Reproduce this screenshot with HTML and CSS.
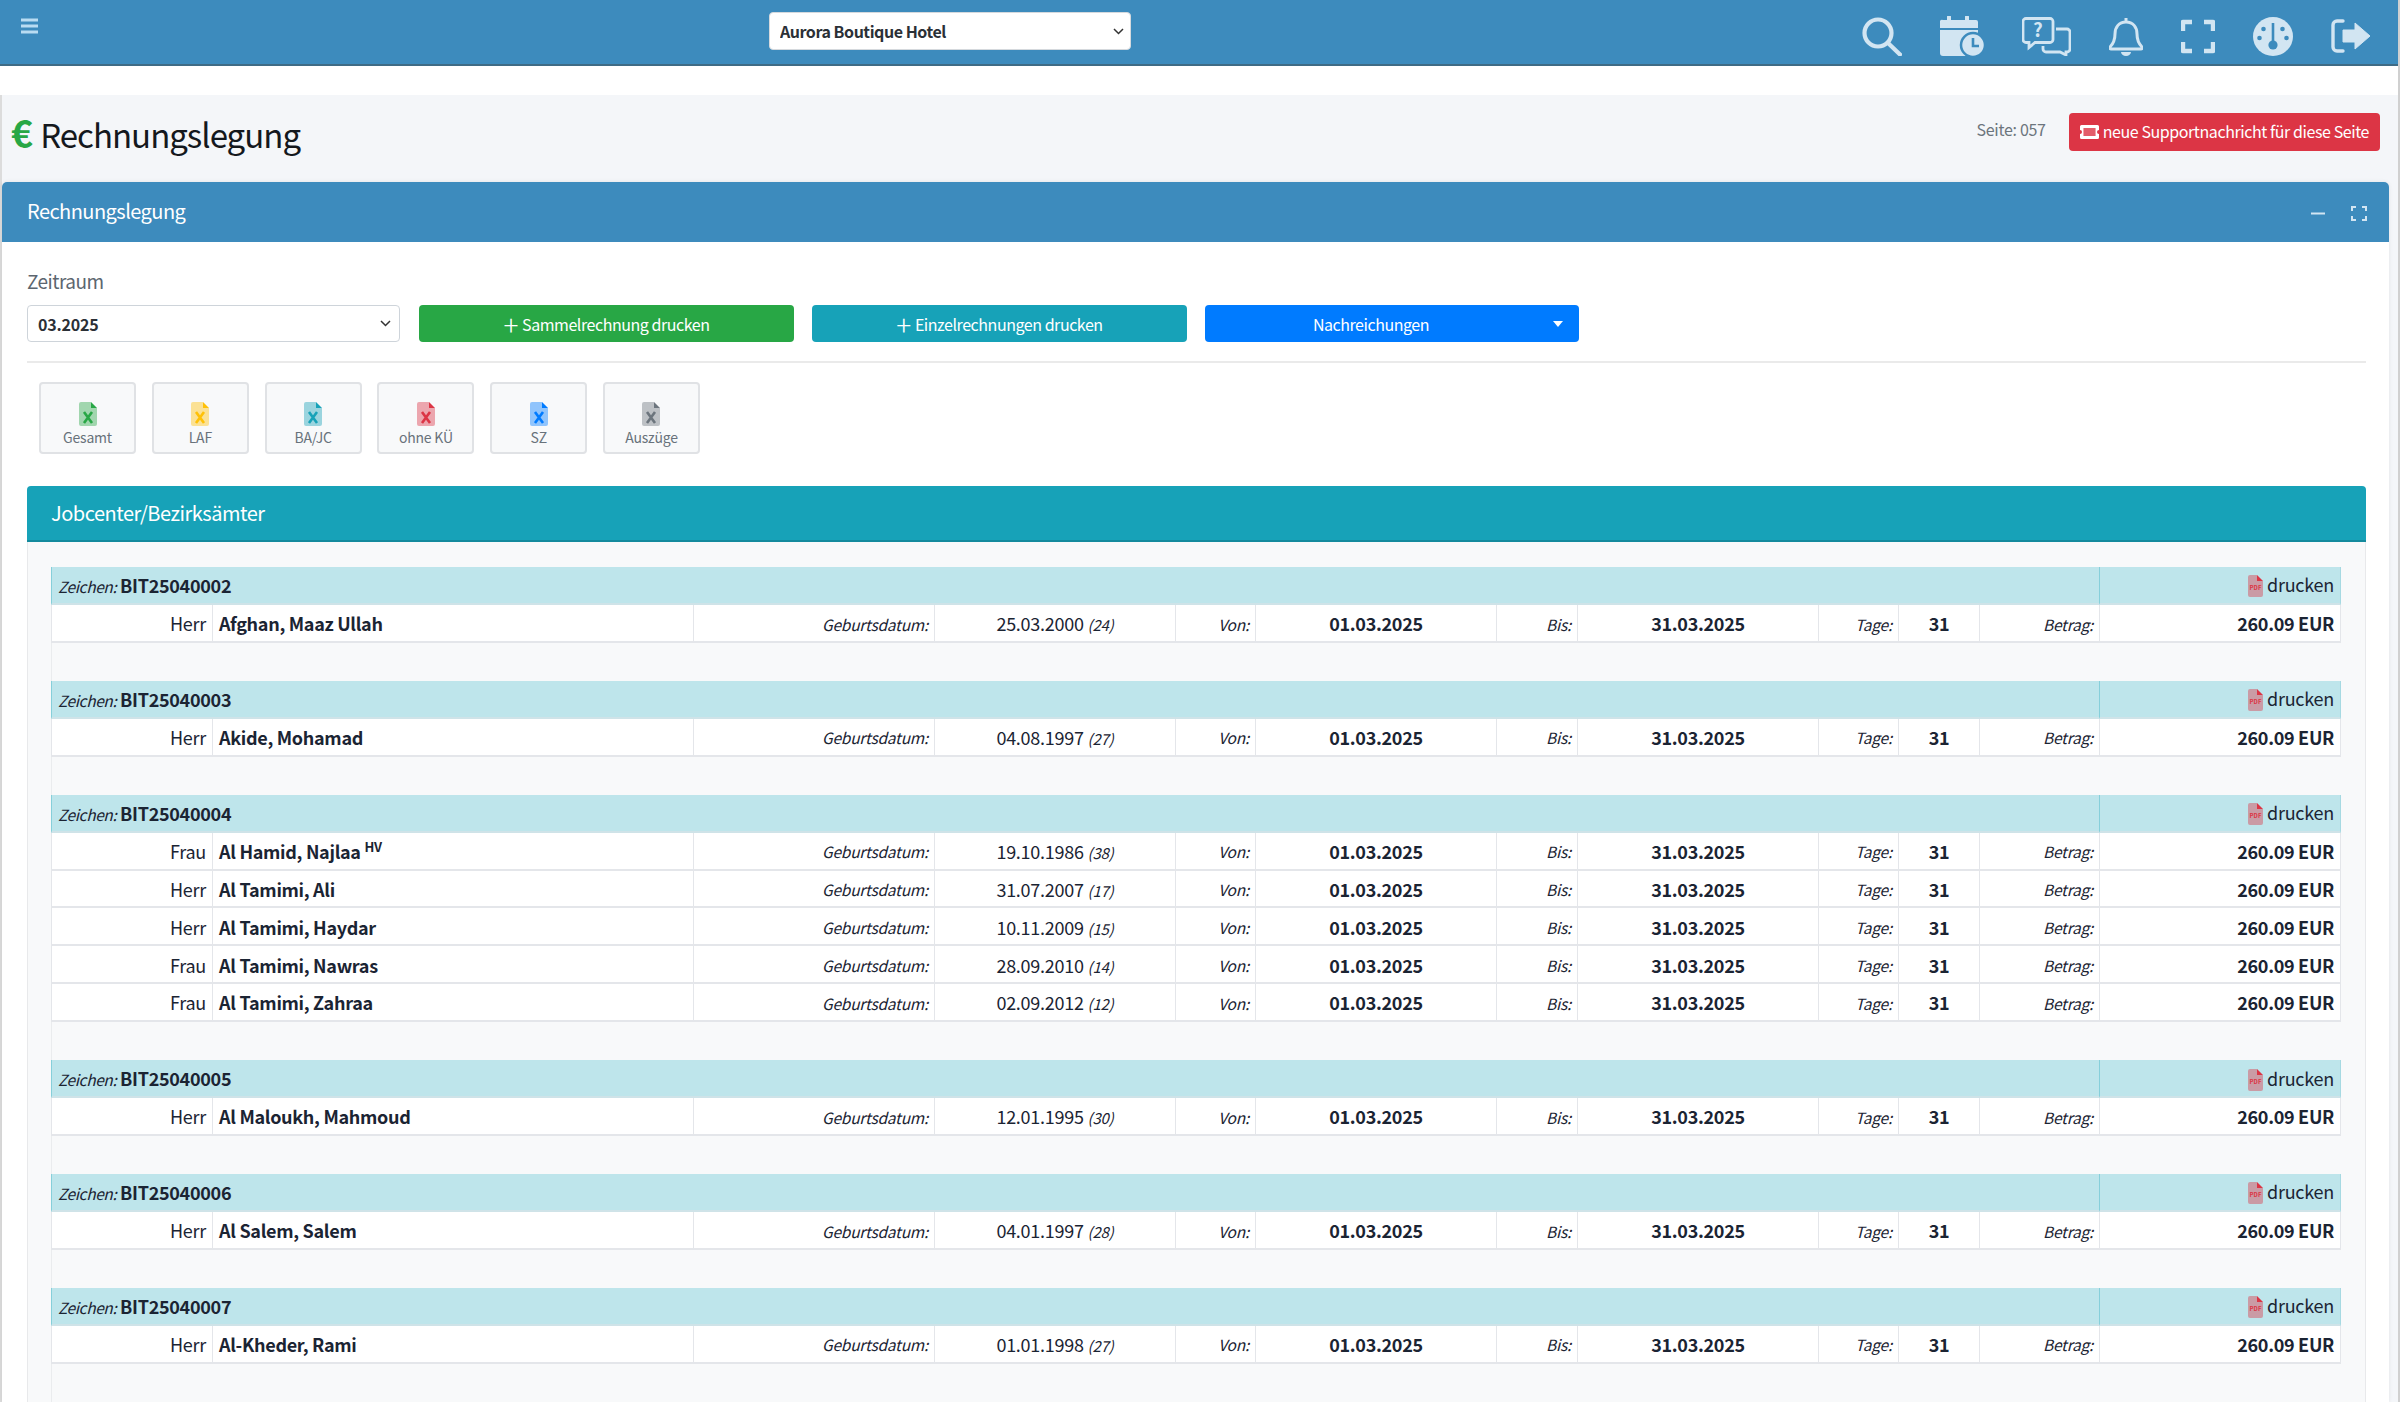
FILE: index.html
```html
<!DOCTYPE html>
<html lang="de">
<head>
    <meta charset="UTF-8">
    <meta name="viewport" content="width=device-width, initial-scale=1.0">
    <title>Rechnungslegung</title>
    <link rel="stylesheet" href="styles.css">
</head>
<body>
    <svg class="sprite" xmlns="http://www.w3.org/2000/svg">
        <symbol id="file-xls" viewBox="0 0 18 24">
            <path d="M2 0h10v6h6v16a2 2 0 0 1-2 2H2a2 2 0 0 1-2-2V2a2 2 0 0 1 2-2z" fill="currentColor" opacity="0.42"/>
            <path d="M12 0l6 6h-6z" fill="currentColor"/>
            <path d="M5 10l8 11M13 10L5 21" stroke="currentColor" stroke-width="2.6" fill="none"/>
        </symbol>
        <symbol id="file-pdf" viewBox="0 0 15 22">
            <path d="M2 0h7v6h6v14a2 2 0 0 1-2 2H2a2 2 0 0 1-2-2V2a2 2 0 0 1 2-2z" fill="#dc3545" opacity="0.42"/>
            <path d="M9 0l6 6H9z" fill="#dc3545"/>
            <text x="7.5" y="15" class="pdf-label">PDF</text>
        </symbol>
    </svg>

    <header class="topbar">
        <a href="#" class="menu-toggle">
            <svg width="17" height="16" viewBox="0 0 17 16"><path d="M0 2h17M0 8h17M0 14h17" stroke="currentColor" stroke-width="2.8"/></svg>
        </a>
        <select class="hotel-select">
            <option>Aurora Boutique Hotel</option>
        </select>
        <nav class="top-icons">
            <svg width="40" height="39" viewBox="0 0 40 39"><circle cx="16" cy="16" r="13.5" fill="none" stroke="currentColor" stroke-width="4.2"/><path d="M26 26l12 11.5" stroke="currentColor" stroke-width="4.2" stroke-linecap="round"/></svg>
            <svg width="44" height="40" viewBox="0 0 44 40">
                <path d="M9 1v8M27 1v8" stroke="currentColor" stroke-width="4" stroke-linecap="round"/>
                <path d="M3 4h33a2 2 0 0 1 2 2v6H0V6a2 2 0 0 1 3-2z" fill="currentColor"/>
                <path d="M0 14h38v26H3a3 3 0 0 1-3-3z" fill="currentColor"/>
                <circle cx="33" cy="29" r="12" fill="currentColor" stroke="#3d8bbd" stroke-width="2.5"/>
                <path d="M33 22v8h6" fill="none" stroke="#3d8bbd" stroke-width="2.6"/>
            </svg>
            <svg width="49" height="39" viewBox="0 0 49 39">
                <path d="M4 1.5h24a3 3 0 0 1 3 3v18a3 3 0 0 1-3 3H13l-6 5v-5H4a3 3 0 0 1-3-3v-18a3 3 0 0 1 3-3z" fill="none" stroke="currentColor" stroke-width="2.8"/>
                <path d="M34 12h11a3 3 0 0 1 3 3v17a3 3 0 0 1-3 3h-1v3l-6-3H24a3 3 0 0 1-3-3v-3" fill="none" stroke="currentColor" stroke-width="2.8"/>
                <text x="16" y="20" class="help-mark">?</text>
            </svg>
            <svg width="34" height="39" viewBox="0 0 34 39">
                <path d="M17 1v4M17 5c7 0 11 5 11 12 0 7 2 10 5 13 1 1 0 2-1 2H2c-1 0-2-1-1-2 3-3 5-6 5-13C6 10 10 5 17 5z" fill="none" stroke="currentColor" stroke-width="3" stroke-linejoin="round"/>
                <path d="M12 35h10a5 4 0 0 1-10 0z" fill="currentColor"/>
            </svg>
            <svg width="34" height="35" viewBox="0 0 34 35"><path d="M2 12V3h9M23 3h9v9M32 23v9h-9M11 32H2v-9" fill="none" stroke="currentColor" stroke-width="4.4" stroke-linejoin="round"/></svg>
            <svg width="40" height="39" viewBox="0 0 40 39">
                <ellipse cx="20" cy="19.5" rx="20" ry="19.5" fill="currentColor"/>
                <path d="M20 6v19" stroke="#3d8bbd" stroke-width="2.6"/>
                <circle cx="20" cy="28" r="4.6" fill="#3d8bbd"/>
                <circle cx="10.500" cy="12" r="2.3" fill="#3d8bbd"/><circle cx="29.500" cy="12" r="2.3" fill="#3d8bbd"/>
                <circle cx="6.500" cy="21" r="2.3" fill="#3d8bbd"/><circle cx="33.500" cy="21" r="2.3" fill="#3d8bbd"/>
            </svg>
            <svg width="39" height="34" viewBox="0 0 39 34">
                <path d="M12 2H6a4 4 0 0 0-4 4v22a4 4 0 0 0 4 4h6" fill="none" stroke="currentColor" stroke-width="3.4" stroke-linecap="round"/>
                <path d="M24 4l15 13-15 13v-7H12v-12h12z" fill="currentColor" stroke="currentColor" stroke-width="1" stroke-linejoin="round"/>
            </svg>
        </nav>
    </header>
    <div class="white-strip"></div>

    <main class="content">
        <div class="page-head">
            <h1><span class="euro">€</span> Rechnungslegung</h1>
            <div class="page-tools">
                <span class="page-no">Seite: 057</span>
                <a href="#" class="btn-support">
                    <svg width="19" height="14" viewBox="0 0 19 14">
                        <path d="M1.500 0h16A1.500 1.500 0 0 1 19 1.500V5a2 2 0 0 0 0 4v3.500a1.500 1.500 0 0 1-1.500 1.500h-16A1.500 1.500 0 0 1 0 12.500V9a2 2 0 0 0 0-4V1.500A1.500 1.500 0 0 1 1.500 0zM3.500 3v8h12V3z" fill="currentColor" fill-rule="evenodd"/>
                        <rect x="3.500" y="3" width="12" height="8" fill="currentColor" opacity="0.2"/>
                    </svg>
                    neue Supportnachricht für diese Seite
                </a>
            </div>
        </div>

        <section class="card">
            <div class="card-header">
                <span>Rechnungslegung</span>
                <div class="card-tools">
                    <svg width="14" height="3" viewBox="0 0 14 3"><path d="M0 1.500h14" stroke="currentColor" stroke-width="2"/></svg>
                    <svg width="16" height="15" viewBox="0 0 16 15"><path d="M1 5V1h4M11 1h4v4M15 10v4h-4M5 14H1v-4" fill="none" stroke="currentColor" stroke-width="2"/></svg>
                </div>
            </div>
            <div class="card-body">
                <label class="field-label" for="zeitraum">Zeitraum</label>
                <div class="filter-row">
                    <select id="zeitraum" class="period-select">
                        <option>03.2025</option>
                    </select>
                    <button type="button" class="btn btn-green"><span class="plus">+</span> Sammelrechnung drucken</button>
                    <button type="button" class="btn btn-teal"><span class="plus">+</span> Einzelrechnungen drucken</button>
                    <button type="button" class="btn btn-blue"><span class="btn-text">Nachreichungen</span><span class="caret"></span></button>
                </div>
                <hr class="divider">

                <div class="export-row">
                    <a href="#" class="tile tile-green"><svg width="18" height="24"><use href="#file-xls"/></svg><span>Gesamt</span></a>
                    <a href="#" class="tile tile-yellow"><svg width="18" height="24"><use href="#file-xls"/></svg><span>LAF</span></a>
                    <a href="#" class="tile tile-teal"><svg width="18" height="24"><use href="#file-xls"/></svg><span>BA/JC</span></a>
                    <a href="#" class="tile tile-red"><svg width="18" height="24"><use href="#file-xls"/></svg><span>ohne KÜ</span></a>
                    <a href="#" class="tile tile-blue"><svg width="18" height="24"><use href="#file-xls"/></svg><span>SZ</span></a>
                    <a href="#" class="tile tile-gray"><svg width="18" height="24"><use href="#file-xls"/></svg><span>Auszüge</span></a>
                </div>

                <section class="jobcenter">
                    <div class="jobcenter-header">Jobcenter/Bezirksämter</div>
                    <div class="jobcenter-body">
                        <table class="invoice-table">
                            <colgroup>
                                <col class="c-162"><col class="c-481"><col class="c-241"><col class="c-241"><col class="c-80"><col class="c-241"><col class="c-81"><col class="c-241"><col class="c-80"><col class="c-81"><col class="c-120"><col class="c-241">
                            </colgroup>
                            <tbody>
                                <tr class="group-head"><td colspan="11"><i>Zeichen:</i> <b>BIT25040002</b></td><td class="print"><svg width="15" height="22"><use href="#file-pdf"/></svg> drucken</td></tr>
                                <tr><td class="r">Herr</td><td><b>Afghan, Maaz Ullah</b></td><td class="lbl">Geburtsdatum:</td><td class="c">25.03.2000 <i>(24)</i></td><td class="lbl">Von:</td><td class="c"><b>01.03.2025</b></td><td class="lbl">Bis:</td><td class="c"><b>31.03.2025</b></td><td class="lbl">Tage:</td><td class="c"><b>31</b></td><td class="lbl">Betrag:</td><td class="r"><b>260.09 EUR</b></td></tr>
                                <tr class="gap"><td colspan="12"></td></tr>

                                <tr class="group-head"><td colspan="11"><i>Zeichen:</i> <b>BIT25040003</b></td><td class="print"><svg width="15" height="22"><use href="#file-pdf"/></svg> drucken</td></tr>
                                <tr><td class="r">Herr</td><td><b>Akide, Mohamad</b></td><td class="lbl">Geburtsdatum:</td><td class="c">04.08.1997 <i>(27)</i></td><td class="lbl">Von:</td><td class="c"><b>01.03.2025</b></td><td class="lbl">Bis:</td><td class="c"><b>31.03.2025</b></td><td class="lbl">Tage:</td><td class="c"><b>31</b></td><td class="lbl">Betrag:</td><td class="r"><b>260.09 EUR</b></td></tr>
                                <tr class="gap"><td colspan="12"></td></tr>

                                <tr class="group-head"><td colspan="11"><i>Zeichen:</i> <b>BIT25040004</b></td><td class="print"><svg width="15" height="22"><use href="#file-pdf"/></svg> drucken</td></tr>
                                <tr><td class="r">Frau</td><td><b>Al Hamid, Najlaa</b> <sup>HV</sup></td><td class="lbl">Geburtsdatum:</td><td class="c">19.10.1986 <i>(38)</i></td><td class="lbl">Von:</td><td class="c"><b>01.03.2025</b></td><td class="lbl">Bis:</td><td class="c"><b>31.03.2025</b></td><td class="lbl">Tage:</td><td class="c"><b>31</b></td><td class="lbl">Betrag:</td><td class="r"><b>260.09 EUR</b></td></tr>
                                <tr><td class="r">Herr</td><td><b>Al Tamimi, Ali</b></td><td class="lbl">Geburtsdatum:</td><td class="c">31.07.2007 <i>(17)</i></td><td class="lbl">Von:</td><td class="c"><b>01.03.2025</b></td><td class="lbl">Bis:</td><td class="c"><b>31.03.2025</b></td><td class="lbl">Tage:</td><td class="c"><b>31</b></td><td class="lbl">Betrag:</td><td class="r"><b>260.09 EUR</b></td></tr>
                                <tr><td class="r">Herr</td><td><b>Al Tamimi, Haydar</b></td><td class="lbl">Geburtsdatum:</td><td class="c">10.11.2009 <i>(15)</i></td><td class="lbl">Von:</td><td class="c"><b>01.03.2025</b></td><td class="lbl">Bis:</td><td class="c"><b>31.03.2025</b></td><td class="lbl">Tage:</td><td class="c"><b>31</b></td><td class="lbl">Betrag:</td><td class="r"><b>260.09 EUR</b></td></tr>
                                <tr><td class="r">Frau</td><td><b>Al Tamimi, Nawras</b></td><td class="lbl">Geburtsdatum:</td><td class="c">28.09.2010 <i>(14)</i></td><td class="lbl">Von:</td><td class="c"><b>01.03.2025</b></td><td class="lbl">Bis:</td><td class="c"><b>31.03.2025</b></td><td class="lbl">Tage:</td><td class="c"><b>31</b></td><td class="lbl">Betrag:</td><td class="r"><b>260.09 EUR</b></td></tr>
                                <tr><td class="r">Frau</td><td><b>Al Tamimi, Zahraa</b></td><td class="lbl">Geburtsdatum:</td><td class="c">02.09.2012 <i>(12)</i></td><td class="lbl">Von:</td><td class="c"><b>01.03.2025</b></td><td class="lbl">Bis:</td><td class="c"><b>31.03.2025</b></td><td class="lbl">Tage:</td><td class="c"><b>31</b></td><td class="lbl">Betrag:</td><td class="r"><b>260.09 EUR</b></td></tr>
                                <tr class="gap"><td colspan="12"></td></tr>

                                <tr class="group-head"><td colspan="11"><i>Zeichen:</i> <b>BIT25040005</b></td><td class="print"><svg width="15" height="22"><use href="#file-pdf"/></svg> drucken</td></tr>
                                <tr><td class="r">Herr</td><td><b>Al Maloukh, Mahmoud</b></td><td class="lbl">Geburtsdatum:</td><td class="c">12.01.1995 <i>(30)</i></td><td class="lbl">Von:</td><td class="c"><b>01.03.2025</b></td><td class="lbl">Bis:</td><td class="c"><b>31.03.2025</b></td><td class="lbl">Tage:</td><td class="c"><b>31</b></td><td class="lbl">Betrag:</td><td class="r"><b>260.09 EUR</b></td></tr>
                                <tr class="gap"><td colspan="12"></td></tr>

                                <tr class="group-head"><td colspan="11"><i>Zeichen:</i> <b>BIT25040006</b></td><td class="print"><svg width="15" height="22"><use href="#file-pdf"/></svg> drucken</td></tr>
                                <tr><td class="r">Herr</td><td><b>Al Salem, Salem</b></td><td class="lbl">Geburtsdatum:</td><td class="c">04.01.1997 <i>(28)</i></td><td class="lbl">Von:</td><td class="c"><b>01.03.2025</b></td><td class="lbl">Bis:</td><td class="c"><b>31.03.2025</b></td><td class="lbl">Tage:</td><td class="c"><b>31</b></td><td class="lbl">Betrag:</td><td class="r"><b>260.09 EUR</b></td></tr>
                                <tr class="gap"><td colspan="12"></td></tr>

                                <tr class="group-head"><td colspan="11"><i>Zeichen:</i> <b>BIT25040007</b></td><td class="print"><svg width="15" height="22"><use href="#file-pdf"/></svg> drucken</td></tr>
                                <tr><td class="r">Herr</td><td><b>Al-Kheder, Rami</b></td><td class="lbl">Geburtsdatum:</td><td class="c">01.01.1998 <i>(27)</i></td><td class="lbl">Von:</td><td class="c"><b>01.03.2025</b></td><td class="lbl">Bis:</td><td class="c"><b>31.03.2025</b></td><td class="lbl">Tage:</td><td class="c"><b>31</b></td><td class="lbl">Betrag:</td><td class="r"><b>260.09 EUR</b></td></tr>
                                <tr class="gap"><td colspan="12"></td></tr>
                            </tbody>
                        </table>
                    </div>
                </section>
            </div>
        </section>
    </main>
</body>
</html>
```

FILE: styles.css
```css
:root {
    --bar-color: #3d8bbd;
    --bar-border: #3f6b85;
    --icon-color: #d2e5f2;
    --page-bg: #f4f6f9;
    --teal: #17a2b8;
    --green: #28a745;
    --blue: #007bff;
    --red: #dc3545;
    --info-row: #bee5eb;
    --text-color: #1b2433;
    --muted: #6c757d;
    --line: #e4e6ea;
}

* {
    margin: 0;
    padding: 0;
    box-sizing: border-box;
}

html, body {
    height: 1402px;
    overflow: hidden;
}

body {
    background-color: #ffffff;
    color: var(--text-color);
    font-family: "Noto Sans CJK SC", "Noto Sans", sans-serif;
    font-size: 17px;
    line-height: 1.2;
    border-right: 2px solid #d0d0d0;
}

a {
    text-decoration: none;
    color: inherit;
}

.sprite {
    display: none;
}

.pdf-label {
    font-size: 6px;
    font-weight: 700;
    text-anchor: middle;
    fill: #dc3545;
    letter-spacing: 0;
}

.help-mark {
    font-size: 19px;
    font-weight: 700;
    text-anchor: middle;
    fill: currentColor;
}

.topbar {
    height: 66px;
    background-color: var(--bar-color);
    border-bottom: 2px solid var(--bar-border);
    display: grid;
    grid-template-columns: 769px 362px 1fr;
    align-items: start;
}

.menu-toggle {
    display: block;
    margin: 18px 0 0 21px;
    width: 17px;
    color: #b9dcf2;
}

.menu-toggle svg {
    display: block;
}

.hotel-select {
    margin-top: 12px;
    height: 38px;
    width: 362px;
    border: 1px solid #d5d9dd;
    border-radius: 4px;
    padding: 0 10px;
    font-family: inherit;
    font-size: 16px;
    font-weight: 700;
    letter-spacing: -0.45px;
    color: #2b3036;
    background: #ffffff url("data:image/svg+xml,%3Csvg xmlns='http://www.w3.org/2000/svg' width='11' height='7'%3E%3Cpath d='M1 1l4.500 4.500L10 1' fill='none' stroke='%23333' stroke-width='1.500'/%3E%3C/svg%3E") no-repeat right 6px center;
    appearance: none;
}

.top-icons {
    display: flex;
    justify-content: flex-end;
    align-items: center;
    gap: 38px;
    padding: 16px 28px 0 0;
    color: var(--icon-color);
}

.white-strip {
    height: 29px;
    background-color: #ffffff;
}

.content {
    height: 1307px;
    background-color: var(--page-bg);
    padding-left: 2px;
    padding-right: 9px;
    box-shadow: inset 2px 0 0 #dcdcdc;
}

.page-head {
    height: 87px;
    display: flex;
    justify-content: space-between;
    align-items: flex-start;
}

.page-head h1 {
    margin: 14px 0 0 9px;
    font-size: 33px;
    font-weight: 400;
    letter-spacing: -1px;
    word-spacing: 2px;
    line-height: 46px;
    color: #14181d;
}

.euro {
    color: var(--green);
    font-size: 37px;
    font-weight: 700;
}

.page-tools {
    display: flex;
    align-items: center;
    gap: 23px;
    margin: 18px 9px 0 0;
}

.page-no {
    font-size: 16px;
    letter-spacing: -0.3px;
    color: var(--muted);
    position: relative;
    top: -2px;
}

.btn-support {
    display: flex;
    align-items: center;
    gap: 4px;
    height: 38px;
    padding: 0 11px;
    background-color: var(--red);
    color: #ffffff;
    font-size: 16px;
    letter-spacing: -0.42px;
    border-radius: 4px;
}

.card {
    background-color: #ffffff;
    border-radius: 5px 5px 0 0;
    height: 1220px;
    box-shadow: 0 0 4px rgba(0, 0, 0, 0.08);
}

.card-header {
    height: 60px;
    background-color: var(--bar-color);
    border-radius: 5px 5px 0 0;
    color: #ffffff;
    font-size: 20px;
    letter-spacing: -0.55px;
    padding: 0 22px 2px 25px;
    display: flex;
    justify-content: space-between;
    align-items: center;
}

.card-tools {
    display: flex;
    align-items: center;
    gap: 26px;
    color: var(--icon-color);
    padding-top: 5px;
}

.card-body {
    padding: 27px 23px 0 25px;
}

.field-label {
    display: block;
    font-size: 19px;
    letter-spacing: -0.5px;
    line-height: 24px;
    color: #5c6670;
    margin-bottom: 12px;
}

.filter-row {
    display: grid;
    grid-template-columns: 374px 375px 375px 374px;
    column-gap: 18px;
    height: 37px;
}

.period-select {
    height: 37px;
    width: 373px;
    border: 1px solid #ced4da;
    border-radius: 4px;
    padding: 0 10px;
    font-family: inherit;
    font-size: 16px;
    font-weight: 700;
    letter-spacing: -0.2px;
    color: #2b3036;
    background: #ffffff url("data:image/svg+xml,%3Csvg xmlns='http://www.w3.org/2000/svg' width='11' height='7'%3E%3Cpath d='M1 1l4.500 4.500L10 1' fill='none' stroke='%23333' stroke-width='1.500'/%3E%3C/svg%3E") no-repeat right 8px center;
    appearance: none;
}

.btn {
    height: 37px;
    border: none;
    border-radius: 4px;
    color: #ffffff;
    font-family: inherit;
    font-size: 16px;
    letter-spacing: -0.45px;
    display: flex;
    justify-content: center;
    align-items: center;
    gap: 4px;
}

.plus {
    font-size: 28px;
    line-height: 24px;
    font-weight: 300;
}

.btn-green {
    background-color: var(--green);
}

.btn-teal {
    background-color: var(--teal);
}

.btn-blue {
    background-color: var(--blue);
    padding-right: 16px;
    gap: 0;
}

.btn-text {
    flex: 1;
    text-align: center;
}

.caret {
    margin-left: 16px;
    border-top: 6px solid #ffffff;
    border-left: 5px solid transparent;
    border-right: 5px solid transparent;
}

.divider {
    border: none;
    border-top: 2px solid #eaeaea;
    margin: 19px 0;
}

.export-row {
    display: flex;
    gap: 15.8px;
    padding-left: 12px;
}

.tile {
    width: 97px;
    height: 72px;
    background-color: #f8f9fa;
    border: 2px solid #e0e2e5;
    border-radius: 4px;
    display: flex;
    flex-direction: column;
    align-items: center;
    padding-top: 18px;
    font-size: 14px;
    line-height: 20px;
    color: #68727b;
}

.tile-green { color: var(--green); }
.tile-yellow { color: #ffc107; }
.tile-teal { color: var(--teal); }
.tile-red { color: var(--red); }
.tile-blue { color: var(--blue); }
.tile-gray { color: var(--muted); }

.tile span {
    color: #68727b;
    letter-spacing: -0.2px;
    margin-top: 1px;
}

.jobcenter {
    margin-top: 32px;
}

.jobcenter-header {
    height: 56px;
    background-color: var(--teal);
    border-bottom: 2px solid #148a9d;
    border-radius: 4px 4px 0 0;
    color: #ffffff;
    font-size: 20px;
    letter-spacing: -0.5px;
    line-height: 54px;
    padding-left: 24px;
}

.jobcenter-body {
    background-color: #f8f9fa;
    border-left: 1px solid #e8e9eb;
    border-right: 1px solid #e8e9eb;
    padding: 25px 24px 0 23px;
    height: 900px;
}

.invoice-table {
    width: 2289px;
    table-layout: fixed;
    border-collapse: separate;
    border-spacing: 0;
    font-size: 18px;
    letter-spacing: -0.25px;
}

.c-162 { width: 162px; }
.c-481 { width: 481px; }
.c-241 { width: 241px; }
.c-80 { width: 80px; }
.c-81 { width: 81px; }
.c-120 { width: 120px; }

.invoice-table td {
    height: 37.95px;
    padding: 2px 6px 0;
    background-color: #ffffff;
    border-right: 1px solid var(--line);
    border-bottom: 2px solid var(--line);
    vertical-align: middle;
    white-space: nowrap;
}

.invoice-table b {
    letter-spacing: -0.3px;
}

.invoice-table td:first-child {
    border-left: 1px solid var(--line);
}

.invoice-table .group-head td {
    background-color: var(--info-row);
    border-color: #a6d9e2;
    border-bottom: 2px solid #cfe3e8;
    border-right: none;
}

.invoice-table .group-head td:first-child {
    border-left: 1px solid #86cfda;
    border-right: 1px solid #86cfda;
}

.invoice-table .group-head .print {
    text-align: right;
    border-right: 1px solid #a6d9e2;
}

.print svg {
    vertical-align: -5px;
}

.invoice-table .gap td {
    background-color: #f8f9fa;
    border-right: none;
    border-bottom: none;
    border-left: 1px solid #eaecee;
}

.r {
    text-align: right;
    padding-right: 7px;
}

.c {
    text-align: center;
}

.lbl {
    text-align: right;
    font-style: italic;
    font-size: 15.5px;
    letter-spacing: -0.25px;
}

.c i {
    font-size: 15px;
    letter-spacing: -0.2px;
}

.group-head i {
    font-size: 15.5px;
    letter-spacing: -0.4px;
}

sup {
    font-size: 13px;
    font-weight: 700;
    line-height: 0;
}
```
